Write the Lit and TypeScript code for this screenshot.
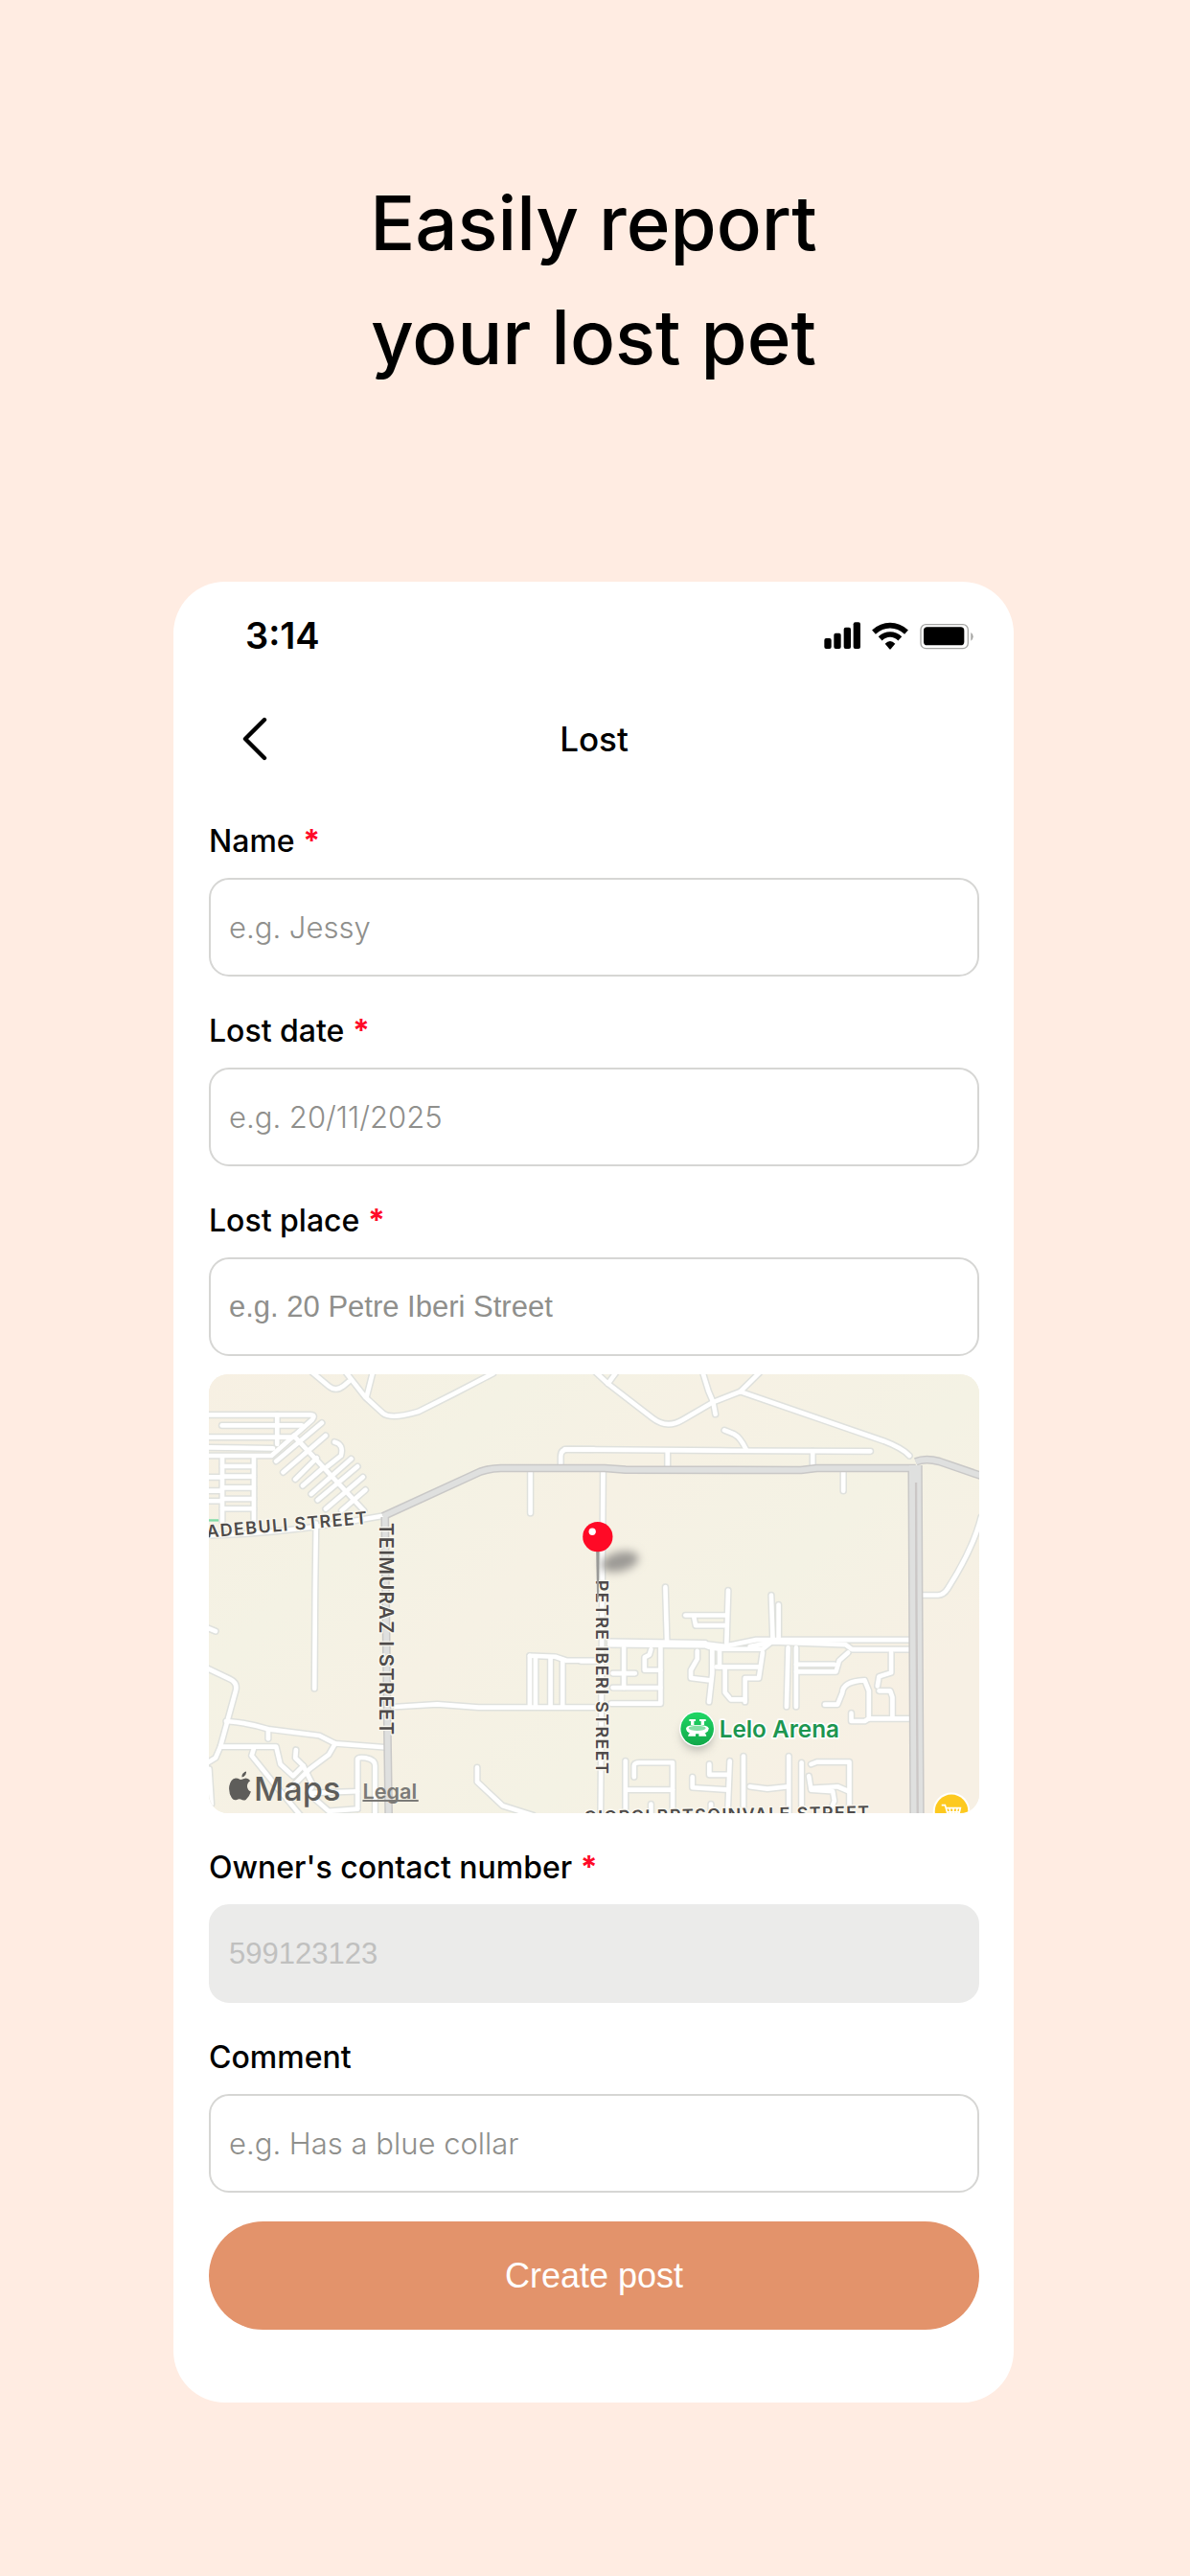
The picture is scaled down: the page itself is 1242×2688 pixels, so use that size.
import { LitElement, html, svg, css } from "lit";
import { customElement, property } from "lit/decorators.js";

/* Street network, split in four tiles that each carry their own origin. */
const TILES = [
  {
    x: -54,
    y: -42,
    roads: [
      "M370 30 L430 80 Q452 98 475 80 L492 66",
      "M478 30 L545 115 L600 165 Q625 185 710 160 L820 105 L945 40",
      "M568 36 L548 115",
      "M50 170 H372 Q390 170 378 185 L250 298 H50",
      "M95 203 H345",
      "M50 240 H320",
      "M50 272 L255 275",
      "M268 170 V262",
      "M96 300 V505",
      "M195 300 V505",
      "M96 331 H195 M96 363 H195 M96 398 H195 M96 433 H195 M96 464 H195",
      "M50 365 H90 M50 408 H90 M50 440 H90",
      "M320 235 L540 470",
      "M408 195 L265 315",
      "M420 235 L287 350",
      "M392 305 L325 372",
      "M448 255 Q478 262 468 298 L425 332",
      "M410 338 L348 392",
      "M500 308 L375 418",
      "M520 332 L395 437",
      "M537 365 L420 465",
      "M545 405 L470 470",
      "M50 548 Q300 542 595 487",
      "M390 510 L387 720 L385 1028",
      "M1062 345 V478",
      "M1157 330 V300 Q1157 278 1180 278 H1260",
    ],
  },
  {
    x: 1176,
    y: -42,
    roads: [
      "M30 30 L75 72 L215 180 Q260 215 310 185 L405 130 L490 97 L940 252 Q1000 275 1020 298",
      "M75 72 L100 38",
      "M372 36 L390 95 L405 130 L412 168",
      "M490 97 L550 38",
      "M440 218 L470 230 Q490 240 508 278",
      "M-60 278 L430 282 L898 284",
      "M262 284 V332",
      "M717 284 V330",
      "M813 345 V408",
      "M60 345 L52 1420",
      "M1245 490 Q1220 590 1140 715 Q1128 734 1110 735 H1060",
    ],
  },
  {
    x: -54,
    y: 648,
    roads: [
      "M50 148 L75 158",
      "M50 275 L120 308 Q145 320 138 345 L90 520 L75 555 L50 570",
      "M108 440 Q180 445 240 465 L400 485 L450 510 L605 522",
      "M240 470 V495",
      "M90 520 H265 L278 575 L318 612 L350 580 L325 555 L327 530",
      "M195 525 L188 548 L270 650 L345 740",
      "M450 510 L430 545 L370 590 L330 630 L300 660",
      "M350 580 L380 640 L365 665 L430 722 L520 715",
      "M520 715 V560 Q520 552 545 555 Q575 560 575 580 V740",
      "M380 665 L520 660",
      "M55 590 L62 700",
      "M640 395 L770 387 L900 397 H1275",
      "M1060 235 V395 M1078 240 V395 M1125 240 V395 M1163 248 V395",
      "M1060 235 L1140 238 L1175 250 H1275",
      "M895 585 V630 L975 705 L1070 735",
    ],
  },
  {
    x: 1176,
    y: 648,
    roads: [
      "M80 190 L380 195",
      "M80 200 L380 203 Q400 212 430 214 H560 L590 190",
      "M380 198 L440 205 L540 185 H1050",
      "M520 206 L590 192 L820 200 L840 215 H1020",
      "M255 20 L260 190",
      "M452 30 L447 195",
      "M318 108 H445",
      "M345 115 L350 140 H440",
      "M587 45 L592 185",
      "M610 75 V185",
      "M-10 252 H40",
      "M125 210 V335",
      "M90 290 H160",
      "M90 335 H240",
      "M85 385 H240 V210",
      "M210 215 L205 232 L190 240 V280 H240",
      "M355 220 V245 L335 280 V305 L395 312",
      "M402 210 V290 L392 380",
      "M425 215 V270",
      "M415 270 H550",
      "M560 225 L548 305 H505 V380",
      "M442 275 V350 L460 372 H505",
      "M640 210 L635 395",
      "M665 210 V395",
      "M665 262 H785",
      "M665 285 H790 L800 250 L828 225",
      "M755 388 H795 L810 350 Q812 315 880 312 L893 345 V432 L880 440 H838 V415",
      "M893 432 H1045",
      "M963 225 V288 L925 300 L920 330",
      "M925 345 H960 L967 365 V430",
      "M130 565 V740",
      "M157 615 V580 Q157 570 175 570 H278 V740",
      "M135 655 H278",
      "M210 700 V740",
      "M393 575 V608 H452",
      "M457 565 L450 740",
      "M340 615 V648 L452 655",
      "M398 700 V740",
      "M500 550 V740",
      "M520 645 L575 652 L640 645",
      "M642 550 V740",
      "M682 570 V740",
      "M712 575 L730 568 H832 V740",
      "M705 612 L712 655 L780 660 L785 690 L765 740",
      "M712 650 L795 645 L830 660",
    ],
  },
];

const AVENUES = [
  { w: 26, d: "M546 446 L851 306 Q886 294 921 295 H1240 L1306 300 L1856 301 L1906 295 H2216" },
  { w: 26, d: "M2216 275 Q2246 262 2290 274 L2430 322" },
  { w: 26, d: "M552 448 L554 648 L560 1130 L564 1400" },
  { w: 46, d: "M2214 286 L2216 700 L2220 1400" },
];

@customElement("lost-map")
export class LostMap extends LitElement {
  static styles = css`
    :host {
      display: block;
      height: 458px;
      border-radius: 20px;
      overflow: hidden;
      background: #f5f1e4;
    }
    .map {
      display: block;
      width: 100%;
      height: 100%;
      font-family: Inter, "Liberation Sans", sans-serif;
    }
    .casing,
    .street {
      fill: none;
      stroke-linecap: round;
      stroke-linejoin: round;
    }
    .casing {
      stroke: #dfe1dd;
      stroke-width: 23;
    }
    .street {
      stroke: #ffffff;
      stroke-width: 14;
    }
    .avenue-edge,
    .avenue {
      fill: none;
      stroke-linejoin: round;
    }
    .avenue-edge {
      stroke: #c9c8c7;
    }
    .avenue {
      stroke: #dfe0df;
    }
    .name {
      fill: #4e4b4a;
      stroke: #faf8f0;
      stroke-width: 8;
      stroke-linejoin: round;
      paint-order: stroke;
      font-weight: 600;
      font-size: 54px;
      letter-spacing: 4px;
    }
    .major {
      font-size: 61px;
    }
    .place {
      fill: #1d9650;
      stroke: #ffffff;
      stroke-width: 10;
      stroke-linejoin: round;
      paint-order: stroke;
      font-weight: 600;
      font-size: 73px;
    }
    .brand {
      fill: #5e5d5a;
      font-weight: 500;
      font-size: 103px;
    }
    .legal {
      fill: #7b7a77;
      font-weight: 600;
      font-size: 65px;
    }
  `;

  render() {
    const layer = (name: string) =>
      TILES.map(
        (t) => svg`<g transform="translate(${t.x} ${t.y})">
          ${t.roads.map((d) => svg`<path class=${name} d=${d}></path>`)}
        </g>`,
      );
    return html`
      <svg class="map" viewBox="0 0 2415 1377" preserveAspectRatio="xMidYMid slice" role="img" aria-label="Map of the lost place">
        <defs>
          <linearGradient id="land" x1="0" y1="0" x2="1" y2="0.6">
            <stop offset="0" stop-color="#f7f0e3"></stop>
            <stop offset="0.3" stop-color="#f4f2e4"></stop>
            <stop offset="0.5" stop-color="#f6f1e4"></stop>
            <stop offset="0.75" stop-color="#f4f2e4"></stop>
            <stop offset="1" stop-color="#f7f0e4"></stop>
          </linearGradient>
          <linearGradient id="green" x1="0" y1="0" x2="0" y2="1">
            <stop offset="0" stop-color="#1fd765"></stop>
            <stop offset="1" stop-color="#12a84a"></stop>
          </linearGradient>
          <filter id="soft" x="-50%" y="-80%" width="200%" height="260%">
            <feGaussianBlur stdDeviation="15"></feGaussianBlur>
          </filter>
        </defs>
        <rect width="2415" height="1377" fill="url(#land)"></rect>
        <rect x="0" y="455" width="32" height="7" fill="#7fdca6"></rect>
        ${layer("casing")} ${layer("street")}
        ${AVENUES.map((a) => svg`<path class="avenue-edge" stroke-width=${a.w} d=${a.d}></path>`)}
        ${AVENUES.map((a) => svg`<path class="avenue" stroke-width=${a.w - 9} d=${a.d}></path>`)}
        <path d="M2217 340 L2218 700 L2222 1377" stroke="#cbc7c6" stroke-width="7" fill="none"></path>

        <text class="name" transform="translate(-6 513) rotate(-5)">ADEBULI STREET</text>
        <text class="name major" transform="translate(534 466) rotate(90)">TEIMURAZ I STREET</text>
        <text class="name" transform="translate(1214 646) rotate(90)">PETRE IBERI STREET</text>
        <text class="name" transform="translate(1176 1408) rotate(-1)">GIORGI BRTSQINVALE STREET</text>

        <ellipse cx="1288" cy="588" rx="60" ry="30" transform="rotate(-14 1288 588)" fill="#9c9a95" filter="url(#soft)"></ellipse>
        <path d="M1214 550 H1224 L1222 700 L1217 716 Z" fill="#999997"></path>
        <circle cx="1219" cy="510" r="47" fill="#ff0a26"></circle>
        <circle cx="1202" cy="494" r="11" fill="#ffffff"></circle>

        <ellipse cx="1531" cy="1132" rx="50" ry="48" fill="#9a9994" opacity="0.6" filter="url(#soft)"></ellipse>
        <circle cx="1531" cy="1112" r="56" fill="#ffffff"></circle>
        <circle cx="1531" cy="1112" r="52" fill="url(#green)"></circle>
        <g fill="#ffffff">
          <path d="M1506 1082 H1526 V1088 H1521 V1100 H1511 V1088 H1506 Z"></path>
          <path d="M1538 1082 H1558 V1088 H1553 V1100 H1543 V1088 H1538 Z"></path>
          <path d="M1496 1110 Q1499 1100 1531 1100 Q1563 1100 1567 1110 Q1567 1121 1555 1126 Q1531 1130 1508 1126 Q1496 1121 1496 1110 Z"></path>
          <path d="M1526 1121 V1135 H1502 Q1503 1122 1526 1121 Z M1536 1121 V1135 H1560 Q1559 1122 1536 1121 Z"></path>
        </g>
        <ellipse cx="1531" cy="1110" rx="27" ry="8" fill="#86dfa6"></ellipse>
        <text class="place" x="1600" y="1138">Lelo Arena</text>

        <circle cx="2328" cy="1370" r="58" fill="#ffffff"></circle>
        <circle cx="2328" cy="1370" r="52" fill="#fdc91f"></circle>
        <path d="M2297 1351 H2308 L2318 1386 H2350 L2356 1360 H2312 M2322 1361 L2326 1385 M2334 1361 V1385 M2346 1361 L2342 1385 M2315 1373 H2352" fill="none" stroke="#ffffff" stroke-width="5"></path>

        <path fill="#5e5d5a" d="M104 1264 Q101 1250 117 1246 Q119 1259 104 1264 Z M99 1271 Q103 1271 110 1268 Q122 1264 130 1275 Q120 1281 120 1292 Q121 1304 132 1309 Q127 1325 116 1334 Q109 1338 100 1333 Q94 1331 88 1334 Q78 1338 72 1329 Q61 1313 64 1291 Q68 1270 84 1267 Q90 1267 99 1271 Z"></path>
        <text class="brand" x="141" y="1336">Maps</text>
        <a href="#legal">
          <text class="legal" x="482" y="1330">Legal</text>
          <path d="M482 1337 H657" stroke="#7b7a77" stroke-width="6"></path>
        </a>
      </svg>
    `;
  }
}

@customElement("form-field")
export class FormField extends LitElement {
  @property() label = "";
  @property() placeholder = "";
  @property() type = "text";
  @property({ type: Boolean }) required = false;
  @property({ type: Boolean }) disabled = false;
  @property({ type: Boolean }) plain = false;

  static styles = css`
    :host {
      display: flex;
      flex-direction: column;
      gap: 16px;
    }
    .label {
      font: 500 32px/44px Inter, "Liberation Sans", sans-serif;
      color: #000000;
    }
    .star {
      color: #ff0a28;
      font-weight: 700;
    }
    .input {
      box-sizing: border-box;
      width: 100%;
      height: 103px;
      padding: 0 19px;
      border: 2px solid #d6d6d4;
      border-radius: 21px;
      background: #ffffff;
      font: 300 31px/40px Inter, "Liberation Sans", sans-serif;
      color: #000000;
    }
    .input::placeholder {
      color: #8f8f8c;
      opacity: 1;
    }
    .plain {
      font: 400 31px/40px "Liberation Sans", Arial, sans-serif;
    }
    .input:disabled {
      border-color: #ebebea;
      background: #ebebea;
    }
    .input:disabled::placeholder {
      color: #c0c0bf;
    }
  `;

  render() {
    return html`
      <label class="label" for="input"
        >${this.label}${this.required ? html` <span class="star">*</span>` : ""}</label
      >
      <input
        id="input"
        class="input ${this.plain ? "plain" : ""}"
        type=${this.type}
        placeholder=${this.placeholder}
        ?required=${this.required}
        ?disabled=${this.disabled}
      />
    `;
  }
}

@customElement("app-root")
export class AppRoot extends LitElement {
  static styles = css`
    :host {
      display: block;
      box-sizing: border-box;
      min-height: 100vh;
      padding: 173px 184px 181px 181px;
      background: #ffece2;
      font-family: Inter, "Liberation Sans", sans-serif;
      color: #000000;
    }
    .headline {
      margin: 0;
      padding: 0 0 196px;
      font-size: 78px;
      font-weight: 500;
      line-height: 119px;
      text-align: center;
    }
    .card {
      padding: 28px 36px 76px 37px;
      border-radius: 54px;
      background: #ffffff;
    }
    .status {
      display: flex;
      align-items: center;
      justify-content: space-between;
      height: 56px;
      padding: 0 6px 0 38px;
    }
    .time {
      font-size: 38px;
      font-weight: 600;
      line-height: 48px;
    }
    .signals {
      display: flex;
      gap: 12px;
    }
    .glyph {
      display: block;
      height: 29px;
    }
    .nav {
      display: grid;
      grid-template-columns: 1fr auto 1fr;
      align-items: center;
      padding: 48px 0 53px;
    }
    .back {
      justify-self: start;
      width: 64px;
      height: 64px;
      margin-left: 16px;
      padding: 0;
      border: 0;
      background: none;
    }
    .chevron {
      display: block;
      margin: auto;
    }
    .title {
      margin: 0;
      font-size: 35px;
      font-weight: 500;
      line-height: 48px;
    }
    .form {
      display: flex;
      flex-direction: column;
      gap: 35px;
    }
    .place {
      display: flex;
      flex-direction: column;
      gap: 19px;
    }
    .last {
      display: flex;
      flex-direction: column;
      gap: 30px;
    }
    .submit {
      height: 113px;
      border: 0;
      border-radius: 57px;
      background: #e3936b;
      color: #ffffff;
      font: 400 36px/44px "Liberation Sans", Arial, sans-serif;
    }
  `;

  render() {
    return html`
      <h1 class="headline">Easily report<br />your lost pet</h1>
      <main class="card">
        <div class="status">
          <span class="time">3:14</span>
          <div class="signals">
            <svg class="glyph" width="38" viewBox="660 143 114 87" aria-hidden="true">
              <rect x="661" y="194" width="22" height="33" rx="6"></rect>
              <rect x="691" y="178" width="22" height="49" rx="6"></rect>
              <rect x="722" y="160" width="22" height="67" rx="6"></rect>
              <rect x="752" y="144" width="22" height="83" rx="6"></rect>
            </svg>
            <svg class="glyph" width="38" viewBox="809 143 114 87" aria-hidden="true">
              <g fill="none" stroke="#000000" stroke-width="17">
                <path d="M815 175 Q838 154 866 154 Q894 154 917 175"></path>
                <path d="M835 195 Q849 182 866 182 Q883 182 897 195"></path>
              </g>
              <path d="M850 211 Q866 195 882 211 L868 228 Q866 230 864 228 Z"></path>
            </svg>
            <svg class="glyph" width="56" viewBox="959 143 168 87" aria-hidden="true">
              <rect x="962" y="151" width="148" height="75" rx="16" fill="none" stroke="#a5a5a3" stroke-width="4"></rect>
              <rect x="971" y="159" width="127" height="57" rx="11"></rect>
              <path d="M1119 176 Q1126 180 1126 189 Q1126 198 1119 202 Z" fill="#a5a5a3"></path>
            </svg>
          </div>
        </div>
        <header class="nav">
          <button class="back" type="button" aria-label="Back">
            <svg class="chevron" width="26" height="46" viewBox="0 0 26 46" aria-hidden="true">
              <path d="M23 3 L3 23 L23 43" fill="none" stroke="#000000" stroke-width="4.4" stroke-linecap="round" stroke-linejoin="round"></path>
            </svg>
          </button>
          <h2 class="title">Lost</h2>
        </header>
        <form class="form">
          <form-field label="Name" placeholder="e.g. Jessy" required></form-field>
          <form-field label="Lost date" placeholder="e.g. 20/11/2025" required></form-field>
          <div class="place">
            <form-field label="Lost place" placeholder="e.g. 20 Petre Iberi Street" required plain></form-field>
            <lost-map></lost-map>
          </div>
          <form-field label="Owner's contact number" type="tel" placeholder="599123123" required disabled plain></form-field>
          <div class="last">
            <form-field label="Comment" placeholder="e.g. Has a blue collar"></form-field>
            <button class="submit" type="button">Create post</button>
          </div>
        </form>
      </main>
    `;
  }
}
